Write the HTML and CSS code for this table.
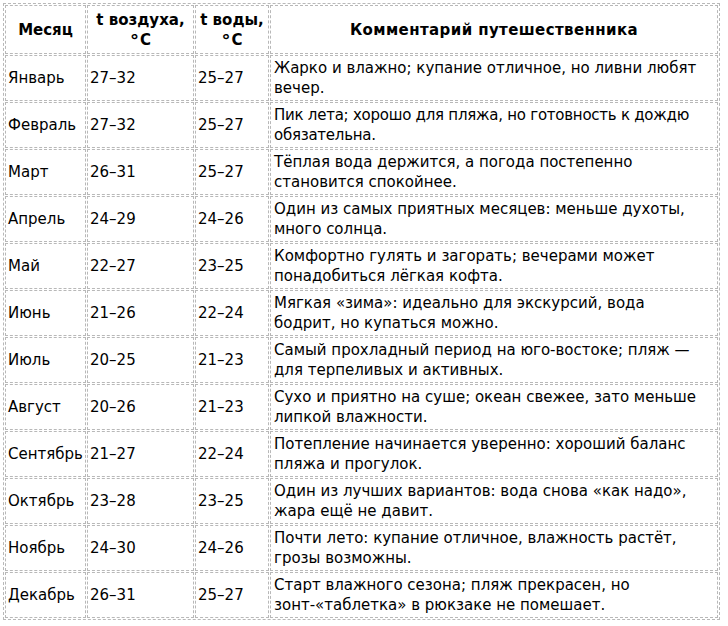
FILE: index.html
```html
<!DOCTYPE html>
<html lang="ru">
<head>
<meta charset="utf-8">
<title>Климат по месяцам</title>
<link rel="stylesheet" href="styles.css">
</head>
<body>
<table class="climate">
  <colgroup>
    <col class="c-month">
    <col class="c-air">
    <col class="c-water">
    <col class="c-note">
  </colgroup>
  <thead>
    <tr>
      <th>Месяц</th>
      <th>t воздуха,<br><span class="deg">°</span>C</th>
      <th>t воды,<br><span class="deg">°</span>C</th>
      <th class="h-note">Комментарий путешественника</th>
    </tr>
  </thead>
  <tbody>
    <tr><td>Январь</td><td>27–32</td><td>25–27</td><td>Жарко и влажно; купание отличное, но ливни любят<br>вечер.</td></tr>
    <tr><td>Февраль</td><td>27–32</td><td>25–27</td><td class="snug">Пик лета; хорошо для пляжа, но готовность к дождю<br>обязательна.</td></tr>
    <tr><td>Март</td><td>26–31</td><td>25–27</td><td>Тёплая вода держится, а погода постепенно<br>становится спокойнее.</td></tr>
    <tr><td>Апрель</td><td>24–29</td><td>24–26</td><td>Один из самых приятных месяцев: меньше духоты,<br>много солнца.</td></tr>
    <tr><td>Май</td><td>22–27</td><td>23–25</td><td>Комфортно гулять и загорать; вечерами может<br>понадобиться лёгкая кофта.</td></tr>
    <tr><td>Июнь</td><td>21–26</td><td>22–24</td><td>Мягкая «зима»: идеально для экскурсий, вода<br>бодрит, но купаться можно.</td></tr>
    <tr><td>Июль</td><td>20–25</td><td>21–23</td><td>Самый прохладный период на юго-востоке; пляж —<br>для терпеливых и активных.</td></tr>
    <tr><td>Август</td><td>20–26</td><td>21–23</td><td>Сухо и приятно на суше; океан свежее, зато меньше<br>липкой влажности.</td></tr>
    <tr><td>Сентябрь</td><td>21–27</td><td>22–24</td><td>Потепление начинается уверенно: хороший баланс<br>пляжа и прогулок.</td></tr>
    <tr><td>Октябрь</td><td>23–28</td><td>23–25</td><td>Один из лучших вариантов: вода снова «как надо»,<br>жара ещё не давит.</td></tr>
    <tr><td>Ноябрь</td><td>24–30</td><td>24–26</td><td>Почти лето: купание отличное, влажность растёт,<br>грозы возможны.</td></tr>
    <tr><td>Декабрь</td><td>26–31</td><td>25–27</td><td>Старт влажного сезона; пляж прекрасен, но<br>зонт-«таблетка» в рюкзаке не помешает.</td></tr>
  </tbody>
</table>
</body>
</html>
```

FILE: styles.css
```css
html, body {
  background: #ffffff;
}
body {
  margin: 3px;
  font-family: "DejaVu Sans", Verdana, sans-serif;
  font-size: 15px;
  color: #000000;
}
.climate {
  table-layout: fixed;
  width: 717px;
  border: 1px dashed #b8b8b8;
  border-collapse: separate;
  border-spacing: 1px;
}
.c-month { width: 81px; }
.c-air { width: 107px; }
.c-water { width: 74px; }
.c-note { width: 448px; }
.climate th,
.climate td {
  border: 1px dashed #b8b8b8;
  line-height: 20px;
  vertical-align: middle;
  white-space: nowrap;
  overflow: visible;
}
.climate th {
  font-weight: bold;
  text-align: center;
  padding: 4px 2px 3px;
}
.climate .h-note {
  letter-spacing: 0.4px;
}
.deg {
  font-size: 18px;
  line-height: 0;
  vertical-align: -2px;
  margin-right: 1px;
}
.climate td {
  text-align: left;
  padding: 2px;
}
.climate td:last-child {
  padding-left: 3px;
}
.climate td.snug {
  letter-spacing: -0.25px;
}
```
